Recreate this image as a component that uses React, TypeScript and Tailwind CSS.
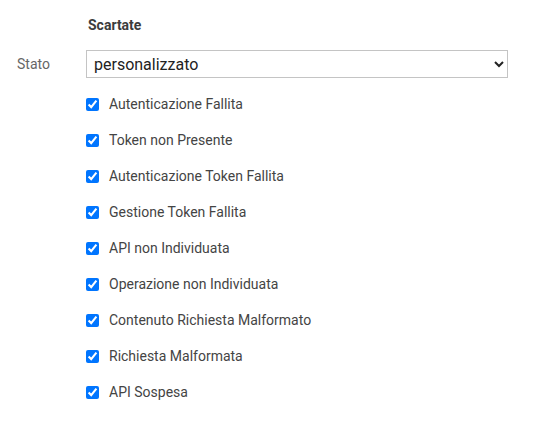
import React from "react";

const items = [
  "Autenticazione Fallita",
  "Token non Presente",
  "Autenticazione Token Fallita",
  "Gestione Token Fallita",
  "API non Individuata",
  "Operazione non Individuata",
  "Contenuto Richiesta Malformato",
  "Richiesta Malformata",
  "API Sospesa",
];

export default function App() {
  return (
    <div
      className="w-[537px] h-[429px] bg-white"
      style={{ fontFamily: "Roboto, 'Liberation Sans', sans-serif" }}
    >
      <div className="pt-[15px] pl-[88px] text-[14px] font-bold text-[#3c3c3c] leading-[20px]">
        Scartate
      </div>
      <div className="flex items-center mt-[15px]">
        <div className="w-[86px] pl-[17px] text-[14px] text-[#666] leading-[20px]">Stato</div>
        <select
          className="w-[422px] h-[28px] border border-[#c4c4c4] bg-white pl-[3px] text-[16px] text-[#222] rounded-none outline-none"
          defaultValue="personalizzato"
        >
          <option value="personalizzato">personalizzato</option>
        </select>
      </div>
      <div className="flex flex-col pl-[86px] mt-[8px]">
        {items.map((t) => (
          <label key={t} className="flex items-center h-[36px]">
            <input type="checkbox" defaultChecked className="w-[13px] h-[13px] m-0 accent-[#0075ff]" />
            <span className="ml-[10px] text-[14px] text-[#444]">{t}</span>
          </label>
        ))}
      </div>
    </div>
  );
}
